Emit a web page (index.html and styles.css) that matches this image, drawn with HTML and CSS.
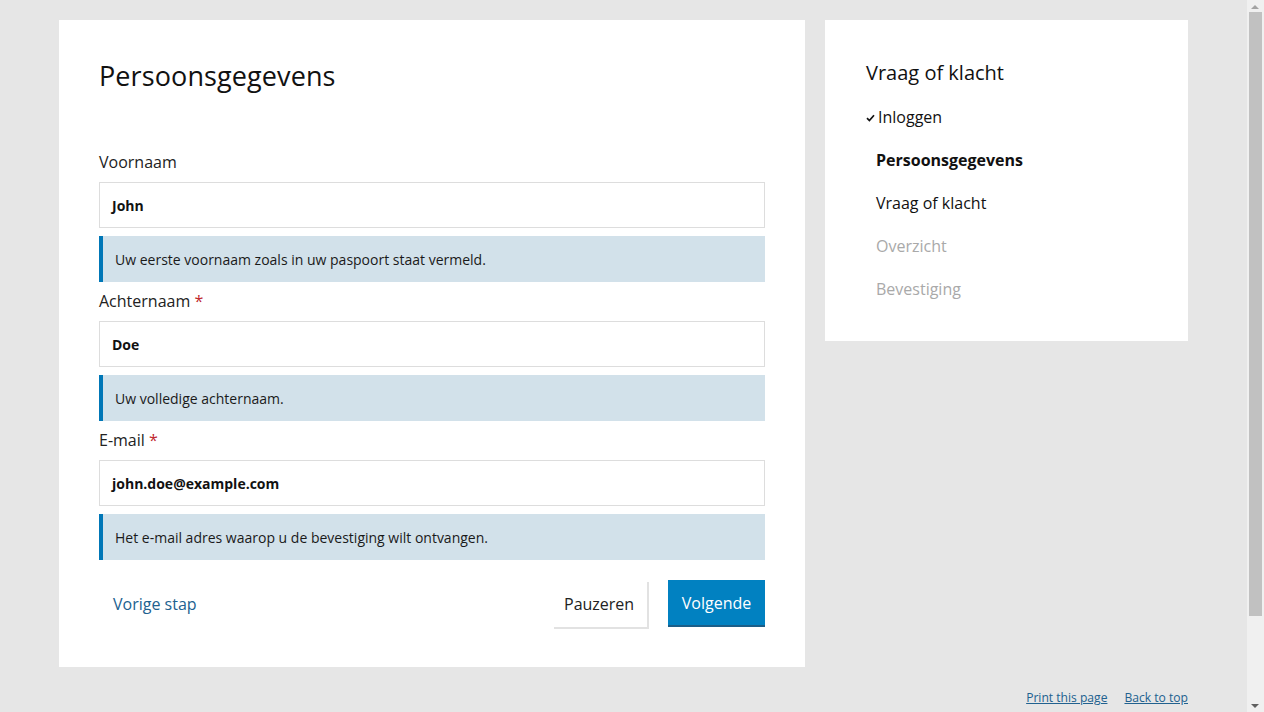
FILE: index.html
```html
<!DOCTYPE html>
<html lang="nl">
<head>
<meta charset="utf-8">
<title>Persoonsgegevens</title>
<link rel="stylesheet" href="styles.css">
</head>
<body>
<div class="viewport">
<div class="page">
  <div class="layout">
    <main class="card main-card">
      <h1 class="title">Persoonsgegevens</h1>
      <form class="form">
        <div class="field">
          <label class="label">Voornaam</label>
          <div class="input">John</div>
          <div class="hint">Uw eerste voornaam zoals in uw paspoort staat vermeld.</div>
        </div>
        <div class="field">
          <label class="label">Achternaam <span class="req">*</span></label>
          <div class="input">Doe</div>
          <div class="hint">Uw volledige achternaam.</div>
        </div>
        <div class="field">
          <label class="label">E-mail <span class="req">*</span></label>
          <div class="input">john.doe@example.com</div>
          <div class="hint">Het e-mail adres waarop u de bevestiging wilt ontvangen.</div>
        </div>
        <div class="actions">
          <a class="prev" href="#">Vorige stap</a>
          <div class="buttons">
            <button type="button" class="btn btn-pause">Pauzeren</button>
            <button type="button" class="btn btn-next">Volgende</button>
          </div>
        </div>
      </form>
    </main>
    <aside class="card side-card">
      <h2 class="side-title">Vraag of klacht</h2>
      <ul class="steps">
        <li class="step done"><svg class="check" width="9" height="8" viewBox="0 0 9 8"><path d="M1 4.2 L3.4 6.6 L8 1.2" fill="none" stroke="#111" stroke-width="1.7"/></svg>Inloggen</li>
        <li class="step current">Persoonsgegevens</li>
        <li class="step">Vraag of klacht</li>
        <li class="step todo">Overzicht</li>
        <li class="step todo">Bevestiging</li>
      </ul>
    </aside>
  </div>
  <footer class="footer">
    <a href="#">Print this page</a>
    <a href="#">Back to top</a>
  </footer>
</div>
</div>
<div class="scrollbar" aria-hidden="true">
  <span class="arrow arrow-up"></span>
  <span class="thumb"></span>
  <span class="arrow arrow-down"></span>
</div>
</body>
</html>
```
FILE: styles.css
```css
html {
  background: #e6e6e6;
}
body {
  margin: 0;
  font-family: "Open Sans", "Noto Sans", sans-serif;
  color: #111;
}
.viewport {
  width: 1247px;
}
.page {
  width: 1129px;
  margin: 0 auto;
  padding: 20px 0 0;
}
.layout {
  display: flex;
  align-items: flex-start;
  gap: 20px;
}
.card {
  background: #fff;
}
.main-card {
  width: 746px;
  box-sizing: border-box;
  padding: 40px 40px 40px;
}
.title {
  margin: 0;
  font-weight: 400;
  font-size: 27px;
  line-height: 32px;
  letter-spacing: 0.1px;
}
.form {
  margin-top: 58px;
}
.field {
  display: flex;
  flex-direction: column;
}
.label {
  font-size: 16px;
  line-height: 24px;
  color: #222;
  margin: 7px 0 8px;
}
.field:first-child .label {
  margin-top: 0;
}
.req {
  color: #c0272d;
}
.input {
  height: 46px;
  box-sizing: border-box;
  border: 1px solid #dddddd;
  padding: 0 12px;
  display: flex;
  align-items: center;
  font-weight: 700;
  font-size: 14px;
  color: #111;
}
.hint {
  margin-top: 8px;
  height: 46px;
  box-sizing: border-box;
  background: #d2e1ea;
  border-left: 4px solid #0077b7;
  padding: 0 12px;
  display: flex;
  align-items: center;
  font-size: 14px;
  color: #1a1a1a;
}
.actions {
  margin-top: 20px;
  display: flex;
  align-items: center;
  justify-content: space-between;
}
.prev {
  margin-left: 14px;
  color: #21618f;
  text-decoration: none;
  font-size: 16px;
}
.buttons {
  display: flex;
  gap: 21px;
}
.btn {
  font-family: inherit;
  font-size: 16px;
  height: 47px;
  border: none;
  padding: 0 13px;
  cursor: pointer;
}
.btn-pause {
  background: #fff;
  color: #222;
  width: 95px;
  box-shadow: 2px 2px 0 #e2e2e2;
  padding: 0 13px 0 12px;
}
.btn-next {
  width: 97px;
  background: #0181c1;
  color: #fff;
  border-bottom: 2px solid #1b5e88;
}
.side-card {
  width: 363px;
  box-sizing: border-box;
  padding: 40px 40px 39px 41px;
}
.side-title {
  margin: 0;
  font-weight: 400;
  font-size: 20px;
  line-height: 26px;
}
.steps {
  list-style: none;
  margin: 19px 0 0;
  padding: 0;
}
.step {
  font-size: 16px;
  line-height: 24px;
  height: 43px;
  padding-left: 10px;
  display: flex;
  align-items: flex-start;
}
.step:last-child {
  height: 24px;
  margin-bottom: 1px;
}
.step.done {
  padding-left: 0;
}
.check {
  margin: 9px 3px 0 0;
}
.step.current {
  font-weight: 700;
}
.step.todo {
  color: #a9a9a9;
}
.footer {
  display: flex;
  justify-content: flex-end;
  gap: 17px;
  padding: 22px 0 100px;
}
.footer a {
  color: #21618f;
  font-size: 12.1px;
  line-height: 18px;
}
.scrollbar {
  position: fixed;
  top: 0;
  right: 0;
  width: 17px;
  height: 100vh;
  background: #f0f0f0;
}
.thumb {
  position: absolute;
  left: 2px;
  right: 2px;
  top: 12px;
  height: 604px;
  background: #c1c1c1;
}
.arrow {
  position: absolute;
  left: 4px;
  width: 0;
  height: 0;
  border-left: 4px solid transparent;
  border-right: 4px solid transparent;
}
.arrow-up {
  top: 5px;
  border-bottom: 4px solid #a3a3a3;
}
.arrow-down {
  bottom: 4px;
  border-top: 4px solid #606060;
}
```
